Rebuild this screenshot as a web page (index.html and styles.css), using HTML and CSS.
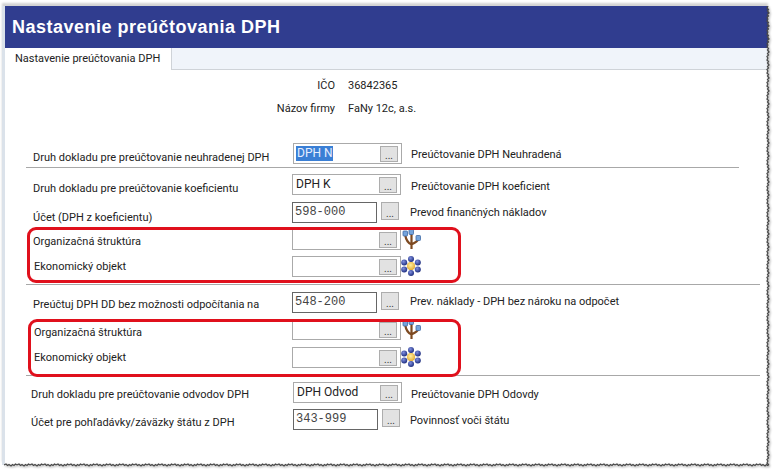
FILE: index.html
```html
<!DOCTYPE html>
<html lang="sk">
<head>
<meta charset="utf-8">
<title>Nastavenie preúčtovania DPH</title>
<link rel="stylesheet" href="styles.css">
</head>
<body>
<svg width="0" height="0" class="defs">
  <defs>
    <g id="tree">
      <path d="M10.500 20V14M10.500 15.500C7 14 5 11 4.200 6M10.500 15.500C13.500 14 16 13 17.500 10M10.500 14V4" fill="none" stroke="#7d4a22" stroke-width="2.200"/>
      <rect x="2" y="2" width="4.500" height="5" rx=".8" fill="#74a4dc" stroke="#3f6aa5" stroke-width=".8"/>
      <rect x="8" y="0.500" width="4.500" height="5" rx=".8" fill="#74a4dc" stroke="#3f6aa5" stroke-width=".8"/>
      <rect x="15" y="6.500" width="4.500" height="5" rx=".8" fill="#74a4dc" stroke="#3f6aa5" stroke-width=".8"/>
    </g>
    <radialGradient id="ball" cx=".4" cy=".35" r=".7"><stop offset="0" stop-color="#7f8fe0"/><stop offset="1" stop-color="#182878"/></radialGradient>
    <radialGradient id="core" cx=".45" cy=".4" r=".7"><stop offset="0" stop-color="#fff0a0"/><stop offset="1" stop-color="#e0a020"/></radialGradient>
    <g id="org">
      <path d="M10 10L10 3M10 10L10 17M10 10L3 6M10 10L17 6M10 10L3 14M10 10L17 14" stroke="#9fb0d8" stroke-width="1"/>
      <circle cx="10" cy="10" r="4.200" fill="url(#core)"/>
      <circle cx="10" cy="3" r="3" fill="url(#ball)"/>
      <circle cx="10" cy="17" r="3" fill="url(#ball)"/>
      <circle cx="3.200" cy="6.500" r="3" fill="url(#ball)"/>
      <circle cx="16.800" cy="6.500" r="3" fill="url(#ball)"/>
      <circle cx="3.200" cy="13.500" r="3" fill="url(#ball)"/>
      <circle cx="16.800" cy="13.500" r="3" fill="url(#ball)"/>
    </g>
    <pattern id="tearV" width="4" height="13" patternUnits="userSpaceOnUse">
      <path d="M2 0L1 2L2.500 3.500L1.500 5L3 7L1.500 8.500L2.500 10L1 11.500L2 13" fill="none" stroke="#4a4a4a" stroke-width="1.300"/>
    </pattern>
    <pattern id="tearH" width="13" height="4" patternUnits="userSpaceOnUse">
      <path d="M0 2L2 1L3.500 2.500L5 1.500L7 3L8.500 1.500L10 2.500L11.500 1L13 2" fill="none" stroke="#4a4a4a" stroke-width="1.300"/>
    </pattern>
  </defs>
</svg>

<div class="window">
  <h1 class="title">Nastavenie preúčtovania DPH</h1>
  <div class="tabs"><div class="tab">Nastavenie preúčtovania DPH</div></div>

  <main class="content">
    <div class="info">
      <div class="info-row"><span class="info-label">IČO</span><span>36842365</span></div>
      <div class="info-row"><span class="info-label">Názov firmy</span><span>FaNy 12c, a.s.</span></div>
    </div>

    <div class="row row-a">
      <span class="label l13">Druh dokladu pre preúčtovanie neuhradenej DPH</span>
      <div class="field wide shift1"><span class="text sel">DPH N</span><span class="btn">...</span></div>
      <span class="desc d12">Preúčtovanie DPH Neuhradená</span>
    </div>
    <hr class="rule rule-a">

    <div class="row">
      <span class="label l13">Druh dokladu pre preúčtovanie koeficientu</span>
      <div class="field wide"><span class="text">DPH K</span><span class="btn">...</span></div>
      <span class="desc d13 first">Preúčtovanie DPH koeficient</span>
    </div>
    <div class="row gap7">
      <span class="label l14">Účet (DPH z koeficientu)</span>
      <div class="field short"><span class="text mono">598-000</span></div><span class="btn solo">...</span>
      <span class="desc d11">Prevod finančných nákladov</span>
    </div>
    <div class="row gap6">
      <span class="label l11">Organizačná štruktúra</span>
      <div class="field wide"><span class="btn">...</span></div>
      <svg class="icon" width="20" height="20" viewBox="0 0 20 20"><use href="#tree"/></svg>
    </div>
    <div class="row gap6">
      <span class="label l9 in1">Ekonomický objekt</span>
      <div class="field wide"><span class="btn">...</span></div>
      <svg class="icon" width="20" height="20" viewBox="0 0 20 20"><use href="#org"/></svg>
    </div>
    <hr class="rule">

    <div class="row">
      <span class="label l11">Preúčtuj DPH DD bez možnosti odpočítania na</span>
      <div class="field short"><span class="text mono">548-200</span></div><span class="btn solo">...</span>
      <span class="desc d10">Prev. náklady - DPH bez nároku na odpočet</span>
    </div>
    <div class="row gap6">
      <span class="label l12 in1">Organizačná štruktúra</span>
      <div class="field wide"><span class="btn">...</span></div>
      <svg class="icon" width="20" height="20" viewBox="0 0 20 20"><use href="#tree"/></svg>
    </div>
    <div class="row gap7">
      <span class="label l9 in2">Ekonomický objekt</span>
      <div class="field wide"><span class="btn">...</span></div>
      <svg class="icon" width="20" height="20" viewBox="0 0 20 20"><use href="#org"/></svg>
    </div>
    <hr class="rule rule-c">

    <div class="row">
      <span class="label l11 out1">Druh dokladu pre preúčtovanie odvodov DPH</span>
      <div class="field wide shift1"><span class="text">DPH Odvod</span><span class="btn">...</span></div>
      <span class="desc d13">Preúčtovanie DPH Odovdy</span>
    </div>
    <div class="row gap6">
      <span class="label l12 out1">Účet pre pohľadávky/záväzky štátu z DPH</span>
      <div class="field short shift1"><span class="text mono">343-999</span></div><span class="btn solo">...</span>
      <span class="desc d13 last">Povinnosť voči štátu</span>
    </div>
  </main>

  <div class="callout callout-a"></div>
  <div class="callout callout-b"></div>
</div>

<svg class="tear tear-v" width="4" height="460"><rect width="4" height="460" fill="url(#tearV)"/></svg>
<svg class="tear tear-h" width="764" height="4"><rect width="764" height="4" fill="url(#tearH)"/></svg>
</body>
</html>
```
FILE: styles.css
```css
* { box-sizing: border-box; }
html, body { margin: 0; height: 100%; }
body {
  background: #fff;
  font-family: Roboto, "Liberation Sans", Arial, sans-serif;
  font-size: 11px;
  color: #222;
  position: relative;
  overflow: hidden;
}
.defs { position: absolute; }

.window {
  position: relative;
  margin: 6px 0 0 2px;
  width: 766px;
  height: 459px;
  border-left: 3px solid #dbe2ea;
  box-shadow: 0 -3px 2px #d4d4d4;
  background: #fff;
}
.title {
  margin: 0;
  height: 42px;
  padding: 9px 0 0 7px;
  background: #303d8f;
  color: #fff;
  font-family: "Liberation Sans", Arial, sans-serif;
  font-size: 18px;
  letter-spacing: .5px;
  line-height: 24px;
  font-weight: bold;
}
.tabs {
  height: 22px;
  background: #f0f4fa;
  border-bottom: 1px solid #cfd3d8;
}
.tab {
  width: 167px;
  height: 22px;
  background: #fff;
  border-right: 1px solid #cfd3d8;
  padding-left: 10px;
  line-height: 22px;
}

.content { padding-top: 4px; }
.info { height: 69px; }
.info-row { display: flex; height: 23px; align-items: center; }
.info-label { width: 330px; text-align: right; margin-right: 13px; }

.row { display: flex; align-items: flex-start; height: 21px; }
.gap6 { margin-top: 6px; }
.gap7 { margin-top: 7px; }
.label { width: 287px; padding-left: 28px; line-height: 16px; white-space: nowrap; }
.in1 { padding-left: 29px; }
.in2 { padding-left: 29px; }
.out1 { padding-left: 26px; }
.l9 { margin-top: 3px; }
.l11 { margin-top: 5px; }
.l12 { margin-top: 6px; }
.l13 { margin-top: 7px; }
.l14 { margin-top: 8px; }

.field {
  flex: none;
  height: 21px;
  border: 1px solid #aaa;
  background: #fff;
  display: flex;
  align-items: center;
  justify-content: space-between;
  padding-right: 3px;
}
.wide { width: 109px; }
.wide .btn:only-child { margin-left: auto; }
.short { width: 85px; border-color: #666; }
.shift1 { margin-left: 1px; }
.text { padding-left: 3px; font-size: 12px; line-height: 15px; }
.sel { background: #3a7fd5; color: #e6eeff; padding: 0 0 0 1px; margin-left: 2px; }
.mono { padding-left: 2px; font-family: "Liberation Mono", monospace; font-size: 12px; color: #444; font-weight: normal; }
.btn {
  flex: none;
  width: 18px;
  height: 16px;
  background: #e2e2e2;
  border: 1px solid #adadad;
  font-size: 10px;
  line-height: 17px;
  text-align: center;
  color: #333;
}
.solo { margin-left: 4px; height: 18px; line-height: 22px; }
.desc { white-space: nowrap; line-height: 14px; }
.d10 { margin: 3px 0 0 11px; }
.d11 { margin: 4px 0 0 11px; }
.d12 { margin: 5px 0 0 9px; }
.d13 { margin: 6px 0 0 9px; }
.first { margin-left: 10px; }
.last { margin: 5px 0 0 10px; }
.icon { flex: none; margin-left: 0; }

.rule {
  margin: 7px 0 7px 21px;
  width: 734px;
  height: 1px;
  border: 0;
  background: #a8a8a8;
}
.rule-a { width: 713px; margin-top: 3px; margin-bottom: 6px; }
.rule-c { margin-top: 7px; margin-bottom: 6px; }

.callout {
  position: absolute;
  left: 22px;
  width: 434px;
  border: 3px solid #e0101c;
  border-radius: 9px;
}
.callout-a { top: 221px; height: 56px; }
.callout-b { top: 313px; height: 58px; left: 23px; width: 433px; }

.tear { position: absolute; filter: drop-shadow(1px 1px 1px rgba(0,0,0,.35)); }
.tear-v { left: 766px; top: 6px; }
.tear-h { left: 4px; top: 463px; }
```
